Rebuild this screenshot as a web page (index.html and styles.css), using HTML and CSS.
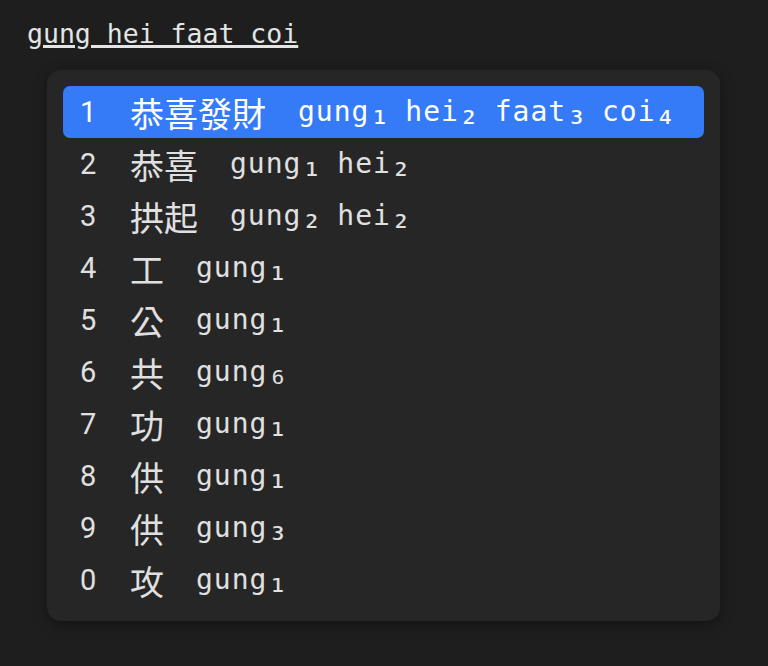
FILE: index.html
```html
<!DOCTYPE html>
<html lang="zh-Hant">
<head>
<meta charset="utf-8">
<title>Candidates</title>
<link rel="stylesheet" href="styles.css">
</head>
<body>
<div class="app">
  <div class="preedit">gung hei faat coi</div>
  <div class="panel">
    <ol class="cands">
      <li class="cand active"><span class="idx">1</span><span class="word">恭喜發財</span><span class="py">gung<span class="tone">₁</span> hei<span class="tone">₂</span> faat<span class="tone">₃</span> coi<span class="tone">₄</span></span></li>
      <li class="cand"><span class="idx">2</span><span class="word">恭喜</span><span class="py">gung<span class="tone">₁</span> hei<span class="tone">₂</span></span></li>
      <li class="cand"><span class="idx">3</span><span class="word">拱起</span><span class="py">gung<span class="tone">₂</span> hei<span class="tone">₂</span></span></li>
      <li class="cand"><span class="idx">4</span><span class="word">工</span><span class="py">gung<span class="tone">₁</span></span></li>
      <li class="cand"><span class="idx">5</span><span class="word">公</span><span class="py">gung<span class="tone">₁</span></span></li>
      <li class="cand"><span class="idx">6</span><span class="word">共</span><span class="py">gung<span class="tone">₆</span></span></li>
      <li class="cand"><span class="idx">7</span><span class="word">功</span><span class="py">gung<span class="tone">₁</span></span></li>
      <li class="cand"><span class="idx">8</span><span class="word">供</span><span class="py">gung<span class="tone">₁</span></span></li>
      <li class="cand"><span class="idx">9</span><span class="word">供</span><span class="py">gung<span class="tone">₃</span></span></li>
      <li class="cand"><span class="idx">0</span><span class="word">攻</span><span class="py">gung<span class="tone">₁</span></span></li>
    </ol>
  </div>
</div>
</body>
</html>
```
FILE: styles.css
```css
html, body {
  margin: 0;
  padding: 0;
  background: #1e1e1e;
  width: 768px;
  height: 666px;
  overflow: hidden;
}

.app {
  padding: 18px 0 0 27px;
}

.preedit {
  font-family: "DejaVu Sans Mono", "Liberation Mono", monospace;
  font-size: 26.5px;
  line-height: 32px;
  color: #e4e4e4;
  text-decoration: underline;
  text-decoration-thickness: 3px;
  text-underline-offset: 2px;
  display: inline-block;
}

.panel {
  margin: 20px 0 0 20px;
  width: 673px;
  height: 551px;
  box-sizing: border-box;
  padding: 16px;
  background: #262626;
  border-radius: 14px;
  box-shadow: 0 4px 14px rgba(0, 0, 0, 0.35);
}

.cands {
  list-style: none;
  margin: 0;
  padding: 0;
}

.cand {
  display: flex;
  align-items: center;
  height: 52px;
  padding-left: 17px;
  border-radius: 7px;
  color: #e0e0e0;
  white-space: nowrap;
}

.cand.active {
  background: #357af6;
  color: #ffffff;
}

.idx {
  width: 50px;
  font-family: Roboto, "Noto Sans", sans-serif;
  font-size: 29px;
}

.word {
  font-family: "Noto Sans CJK TC", "Noto Sans CJK SC", sans-serif;
  font-size: 34px;
  margin-right: 32px;
}

.py {
  font-family: "DejaVu Sans Mono", "Liberation Mono", monospace;
  font-size: 28px;
  line-height: 40px;
  letter-spacing: 1px;
}

.tone {
  font-size: 34px;
  line-height: 1;
  letter-spacing: -2.5px;
  position: relative;
  top: 3px;
}
```
